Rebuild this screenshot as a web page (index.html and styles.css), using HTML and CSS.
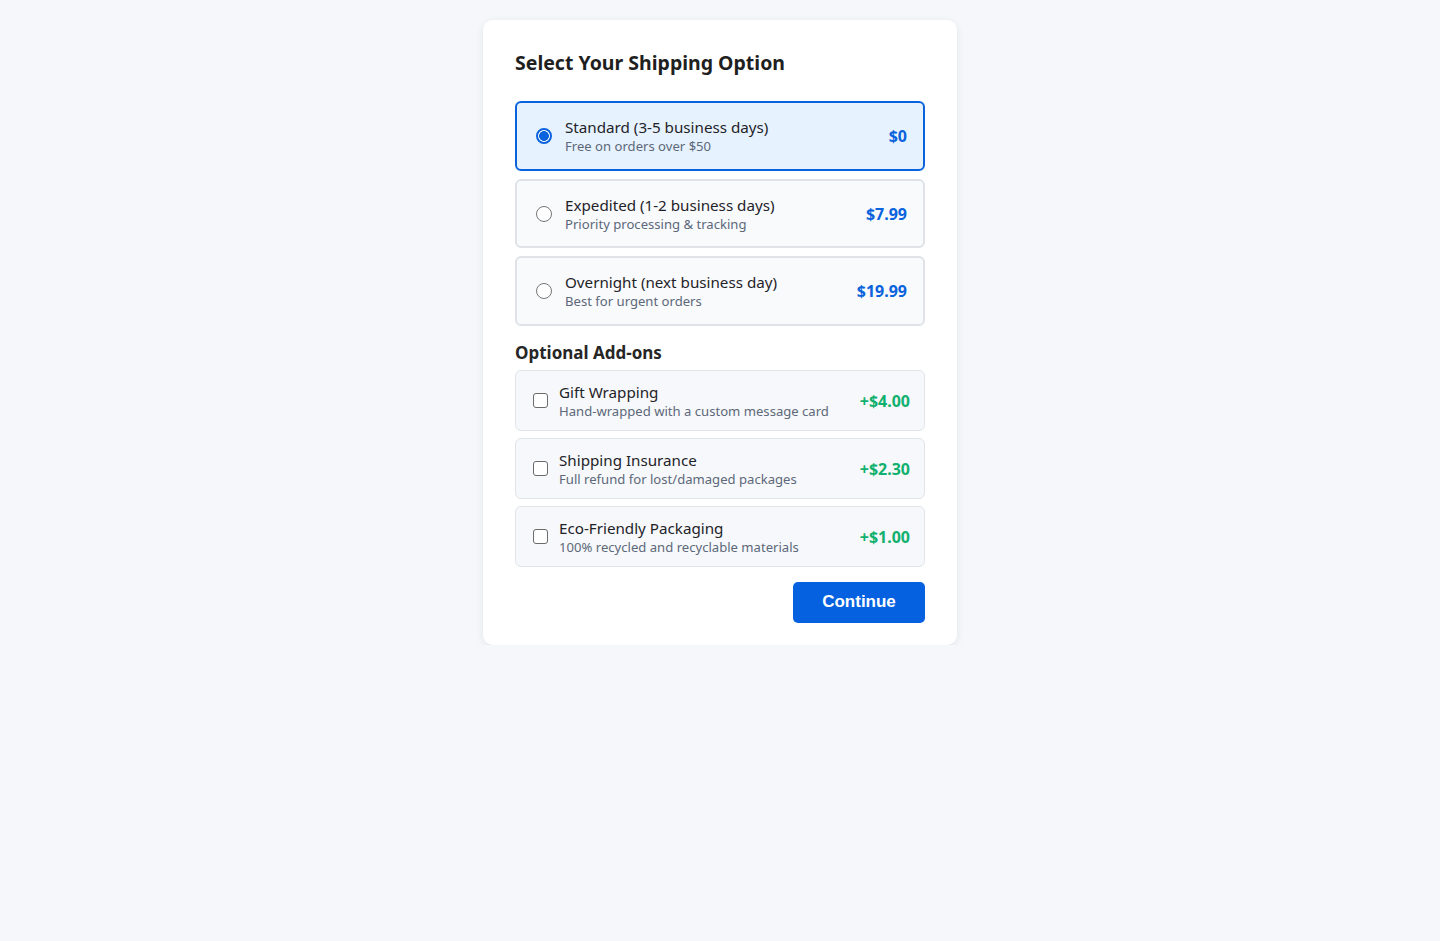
FILE: index.html
```html
<!DOCTYPE html>
<html lang="en">
<head>
<meta charset="utf-8">
<title>Select Your Shipping Option</title>
<link rel="stylesheet" href="styles.css">
</head>
<body>
<main class="card">
  <h2 class="title">Select Your Shipping Option</h2>
  <div class="options">
    <label class="option selected">
      <input type="radio" name="ship" class="radio" checked>
      <span class="info">
        <span class="name">Standard (3-5 business days)</span>
        <span class="desc">Free on orders over $50</span>
      </span>
      <span class="price">$0</span>
    </label>
    <label class="option">
      <input type="radio" name="ship" class="radio">
      <span class="info">
        <span class="name">Expedited (1-2 business days)</span>
        <span class="desc">Priority processing &amp; tracking</span>
      </span>
      <span class="price">$7.99</span>
    </label>
    <label class="option">
      <input type="radio" name="ship" class="radio">
      <span class="info">
        <span class="name">Overnight (next business day)</span>
        <span class="desc">Best for urgent orders</span>
      </span>
      <span class="price">$19.99</span>
    </label>
  </div>
  <h3 class="subtitle">Optional Add-ons</h3>
  <div class="addons">
    <label class="addon">
      <input type="checkbox" class="check">
      <span class="info">
        <span class="name">Gift Wrapping</span>
        <span class="desc">Hand-wrapped with a custom message card</span>
      </span>
      <span class="addon-price">+$4.00</span>
    </label>
    <label class="addon">
      <input type="checkbox" class="check">
      <span class="info">
        <span class="name">Shipping Insurance</span>
        <span class="desc">Full refund for lost/damaged packages</span>
      </span>
      <span class="addon-price">+$2.30</span>
    </label>
    <label class="addon">
      <input type="checkbox" class="check">
      <span class="info">
        <span class="name">Eco-Friendly Packaging</span>
        <span class="desc">100% recycled and recyclable materials</span>
      </span>
      <span class="addon-price">+$1.00</span>
    </label>
  </div>
  <div class="actions">
    <button class="continue" type="button">Continue</button>
  </div>
</main>
</body>
</html>
```

FILE: styles.css
```css
* { box-sizing: border-box; }
html, body { margin: 0; padding: 0; }
body {
  background: #f5f7fa;
  font-family: "Noto Sans", "DejaVu Sans", sans-serif;
  color: #1f2328;
}
.card {
  width: 474px;
  margin: 20px auto 0;
  background: #ffffff;
  border-radius: 10px;
  box-shadow: 0 2px 8px rgba(20, 30, 50, 0.08);
  padding: 32px 32px 22px;
}
.title {
  margin: 0 0 27px;
  font-size: 19.5px;
  line-height: 22px;
  font-weight: 700;
  color: #1f1f1f;
}
.options {
  display: flex;
  flex-direction: column;
  gap: 8px;
}
.option {
  display: flex;
  align-items: center;
  border: 2px solid #dfe3e8;
  background: #f8fafc;
  border-radius: 6px;
  padding: 14px 16px 13.5px 19px;
  cursor: pointer;
}
.option.selected {
  border-color: #0a63dc;
  background: #e6f2fe;
}
.radio {
  appearance: none;
  -webkit-appearance: none;
  margin: 0 13px 0 0;
  width: 16px;
  height: 16px;
  border: 1px solid #767676;
  border-radius: 50%;
  background: #ffffff;
  flex: none;
}
.radio:checked {
  border: 2px solid #0a63dc;
  background: radial-gradient(circle, #0a63dc 0 4.6px, #ffffff 5.2px);
}
.info {
  display: flex;
  flex-direction: column;
  flex: 1;
  min-width: 0;
}
.name {
  font-size: 15.2px;
  line-height: 20px;
  color: #1f2328;
}
.desc {
  font-size: 13.1px;
  line-height: 18px;
  color: #5d687a;
}
.price {
  font-size: 16px;
  font-weight: 700;
  color: #0a63dc;
}
.subtitle {
  margin: 17px 0 7px;
  font-size: 17px;
  line-height: 20px;
  font-weight: 700;
  color: #262626;
}
.addons {
  display: flex;
  flex-direction: column;
  gap: 7px;
}
.addon {
  display: flex;
  align-items: center;
  border: 1px solid #e1e5ea;
  background: #f6f8fb;
  border-radius: 6px;
  padding: 11px 14px 10px 17px;
  cursor: pointer;
}
.check {
  appearance: none;
  -webkit-appearance: none;
  margin: 0 11px 0 0;
  width: 15px;
  height: 15px;
  border: 1px solid #6b6b6b;
  border-radius: 3px;
  background: #ffffff;
  flex: none;
}
.addon-price {
  font-size: 16px;
  font-weight: 700;
  color: #12b06e;
}
.actions {
  display: flex;
  justify-content: flex-end;
  margin-top: 15px;
}
.continue {
  width: 132px;
  height: 41px;
  border: none;
  border-radius: 5px;
  background: #0561e0;
  color: #ffffff;
  font-family: "Liberation Sans", Arial, sans-serif;
  font-size: 17px;
  font-weight: 700;
  cursor: pointer;
}
```
